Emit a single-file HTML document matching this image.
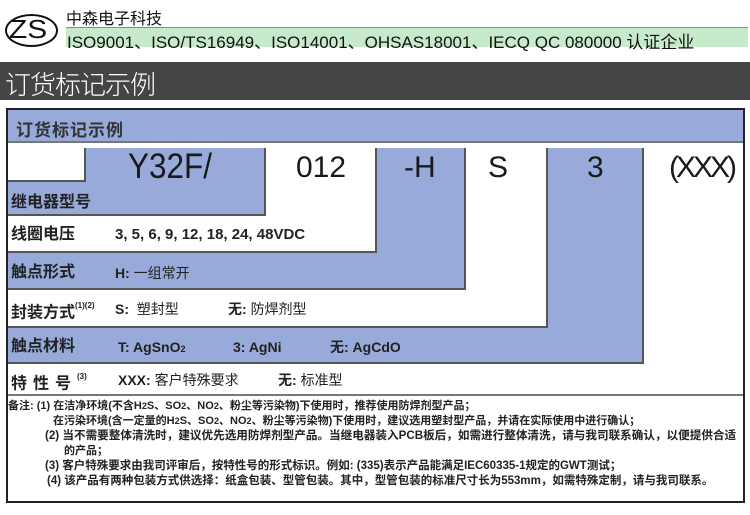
<!DOCTYPE html>
<html><head><meta charset="utf-8"><style>
*{margin:0;padding:0;box-sizing:border-box}
body{width:750px;height:515px;background:#fff;position:relative;overflow:hidden;font-family:"Liberation Sans","Noto Sans CJK SC",sans-serif;color:#111}
.a{position:absolute}
.blue{background:#97aad9}
.big{position:absolute;top:150px;font-size:30px;color:#1a1a1a;line-height:36px}
.lab{position:absolute;left:11px;font-size:16px;font-weight:bold;color:#222;line-height:20px}
.val{position:absolute;font-size:14px;font-weight:bold;color:#222;line-height:20px;letter-spacing:0;white-space:nowrap}
.val span{font-weight:normal}
.n{position:absolute;font-size:11px;font-weight:bold;color:#222;white-space:nowrap;line-height:14px}
.ln{position:absolute;background:#555}
</style></head><body>
<div class="a" style="left:5px;top:14px;width:53px;height:33px;border:2px solid #111;border-radius:50%"></div>
<div class="a" style="left:9px;top:14px;font-size:26px;color:#111;transform:scaleX(1.15);transform-origin:left">ZS</div>
<div class="a" style="left:66px;top:5px;font-size:16px;color:#111">中森电子科技</div>
<div class="a" style="left:66px;top:27px;width:682px;height:20px;background:#c7e9cc;border-top:1px solid #888"></div>
<div class="a" style="left:67px;top:28px;font-size:17px;color:#111;white-space:nowrap;letter-spacing:0">ISO9001、ISO/TS16949、ISO14001、OHSAS18001、IECQ QC 080000 认证企业</div>
<div class="a" style="left:0;top:62px;width:750px;height:38px;background:#454545"></div>
<div class="a" style="left:5px;top:65px;font-size:26px;color:#fff;letter-spacing:-1px;font-weight:300">订货标记示例</div>

<div class="a" style="left:6px;top:108px;width:739px;height:395px;border:2px solid #222"></div>
<div class="a" style="left:8px;top:110px;width:735px;height:33px;background:#97aad9;border-bottom:2px solid #777"></div>
<div class="a" style="left:16px;top:116px;font-size:17px;font-weight:bold;color:#333;letter-spacing:1px">订货标记示例</div>

<div class="a blue" style="left:85px;top:148px;width:180px;height:67px"></div>
<div class="a blue" style="left:8px;top:181px;width:257px;height:34px"></div>
<div class="a blue" style="left:377px;top:148px;width:88px;height:141px"></div>
<div class="a blue" style="left:8px;top:252px;width:457px;height:37px"></div>
<div class="a blue" style="left:547px;top:148px;width:96px;height:215px"></div>
<div class="a blue" style="left:8px;top:327px;width:635px;height:36px"></div>
<div class="ln" style="left:84px;top:148px;width:2px;height:34px"></div>
<div class="ln" style="left:8px;top:180px;width:77px;height:2px"></div>
<div class="ln" style="left:264px;top:148px;width:2px;height:68px"></div>
<div class="ln" style="left:8px;top:214px;width:258px;height:2px"></div>
<div class="ln" style="left:375px;top:148px;width:2px;height:105px"></div>
<div class="ln" style="left:8px;top:251px;width:369px;height:2px"></div>
<div class="ln" style="left:464px;top:148px;width:2px;height:142px"></div>
<div class="ln" style="left:8px;top:288px;width:458px;height:2px"></div>
<div class="ln" style="left:546px;top:148px;width:2px;height:180px"></div>
<div class="ln" style="left:8px;top:326px;width:540px;height:2px"></div>
<div class="ln" style="left:642px;top:148px;width:2px;height:216px"></div>
<div class="ln" style="left:8px;top:362px;width:636px;height:2px"></div>
<div class="ln" style="left:8px;top:394px;width:735px;height:2px;background:#777"></div>

<div class="big" style="left:128px;top:149px;font-size:35px;transform:scaleX(.9);transform-origin:left">Y32F/</div>
<div class="big" style="left:296px">012</div>
<div class="big" style="left:404px">-H</div>
<div class="big" style="left:488px">S</div>
<div class="big" style="left:587px">3</div>
<div class="big" style="left:669px;letter-spacing:-3px">(XXX)</div>

<div class="lab" style="top:193px">继电器型号</div>
<div class="lab" style="top:225px">线圈电压</div>
<div class="val" style="left:115px;top:225px;font-size:15px">3, 5, 6, 9, 12, 18, 24, 48VDC</div>
<div class="lab" style="top:263px">触点形式</div>
<div class="val" style="left:115px;top:263px">H: <span>一组常开</span></div>
<div class="lab" style="top:299px">封装方式<sup style="font-size:8px;position:relative;top:-3px">(1)(2)</sup></div>
<div class="val" style="left:115px;top:299px">S: &nbsp;<span>塑封型</span></div>
<div class="val" style="left:228px;top:299px">无: <span>防焊剂型</span></div>
<div class="lab" style="top:337px">触点材料</div>
<div class="val" style="left:118px;top:337px">T: AgSnO<span style="font-size:9px;font-weight:bold">2</span></div>
<div class="val" style="left:233px;top:337px">3: AgNi</div>
<div class="val" style="left:330px;top:337px">无: AgCdO</div>
<div class="lab" style="top:370px;letter-spacing:6px">特性号<sup style="font-size:8px;letter-spacing:0;position:relative;top:-3px">(3)</sup></div>
<div class="val" style="left:118px;top:370px">XXX: <span>客户特殊要求</span></div>
<div class="val" style="left:278px;top:370px">无: <span>标准型</span></div>

<div class="n" style="left:8px;top:399px">备注: (1) 在洁净环境(不含H<small>2</small>S、SO<small>2</small>、NO<small>2</small>、粉尘等污染物)下使用时，推荐使用防焊剂型产品；</div>
<div class="n" style="left:53px;top:414px">在污染环境(含一定量的H<small>2</small>S、SO<small>2</small>、NO<small>2</small>、粉尘等污染物)下使用时，建议选用塑封型产品，并请在实际使用中进行确认；</div>
<div class="n" style="left:45px;top:429px;font-size:11.6px">(2) 当不需要整体清洗时，建议优先选用防焊剂型产品。当继电器装入PCB板后，如需进行整体清洗，请与我司联系确认，以便提供合适</div>
<div class="n" style="left:64px;top:444px">的产品；</div>
<div class="n" style="left:45px;top:459px;font-size:11.5px">(3) 客户特殊要求由我司评审后，按特性号的形式标识。例如: (335)表示产品能满足IEC60335-1规定的GWT测试；</div>
<div class="n" style="left:47px;top:474px;font-size:11.5px">(4) 该产品有两种包装方式供选择：纸盒包装、型管包装。其中，型管包装的标准尺寸长为553mm，如需特殊定制，请与我司联系。</div>
</body></html>
